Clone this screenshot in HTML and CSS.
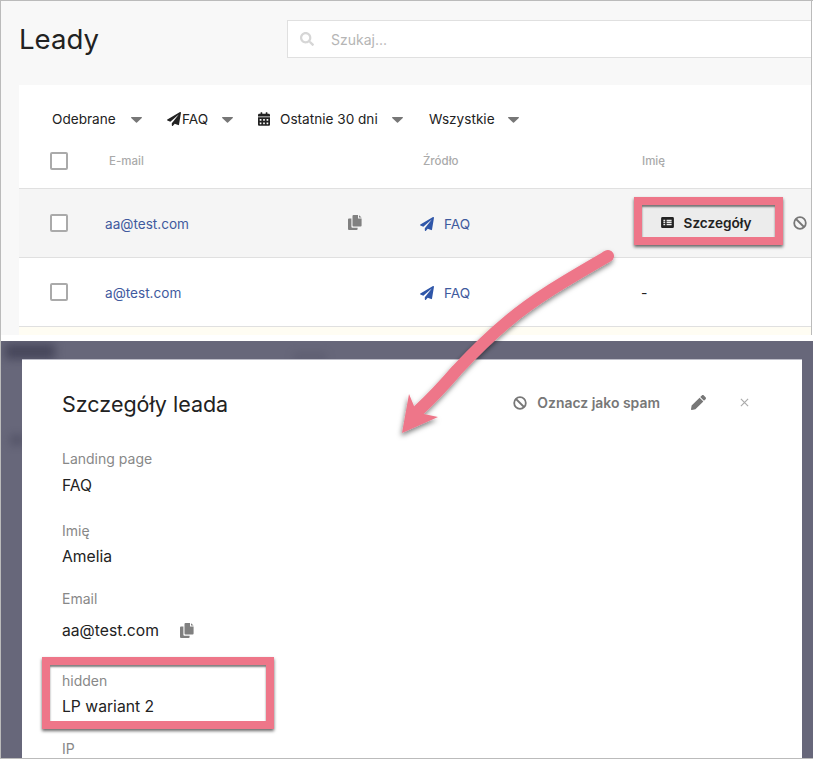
FILE: index.html
```html
<!DOCTYPE html>
<html lang="pl">
<head>
<meta charset="utf-8">
<title>Leady</title>
<link rel="stylesheet" href="styles.css">
</head>
<body>
<svg class="defs" width="0" height="0" aria-hidden="true">
  <symbol id="plane" viewBox="0 0 512 512"><path d="M476 3.2L12.5 270.6c-18.1 10.4-15.8 35.6 2.2 43.2L121 358.4l287.3-253.2c5.5-4.9 13.3 2.6 8.6 8.3L176 407v80.5c0 23.6 28.5 32.9 42.5 15.8L282 426l124.6 52.2c14.2 6 30.4-2.9 33-18.2l72-432C515 7.8 493.3-6.8 476 3.2z"/></symbol>
  <symbol id="copy" viewBox="0 0 14 15"><path d="M5.5 0H10v3.6h3.6V10.6a1 1 0 0 1-1 1H5.5a1 1 0 0 1-1-1V1a1 1 0 0 1 1-1zM11 .2l2.6 2.4H11zM3.4 3.4v8.3a1 1 0 0 0 1 1h5.2v1.2a1 1 0 0 1-1 1H1a1 1 0 0 1-1-1V4.4a1 1 0 0 1 1-1z"/></symbol>
  <symbol id="ban" viewBox="0 0 14 14"><circle cx="7" cy="7" r="5.8" fill="none" stroke="currentColor" stroke-width="1.8"/><path d="M3 3l8 8" stroke="currentColor" stroke-width="1.8"/></symbol>
  <symbol id="caret" viewBox="0 0 11 6"><path d="M.6 0h9.8c.5 0 .8.6.4 1L6 5.6c-.3.3-.7.3-1 0L.2 1C-.2.6.1 0 .6 0z"/></symbol>
</svg>
<div class="frame">
  <section class="app">
    <header class="topbar">
      <h1 class="title">Leady</h1>
      <div class="search">
        <svg class="search-icon" viewBox="0 0 512 512"><path d="M505 442.7L405.3 343c-4.5-4.5-10.6-7-17-7H372c27.6-35.3 44-79.7 44-128C416 93.1 322.9 0 208 0S0 93.1 0 208s93.1 208 208 208c48.3 0 92.7-16.4 128-44v16.3c0 6.4 2.5 12.5 7 17l99.7 99.7c9.4 9.4 24.6 9.4 33.9 0l28.3-28.3c9.4-9.4 9.4-24.6.1-34zM208 336c-70.7 0-128-57.2-128-128 0-70.7 57.2-128 128-128 70.7 0 128 57.2 128 128 0 70.7-57.2 128-128 128z"/></svg>
        <span class="search-text">Szukaj...</span>
      </div>
    </header>
    <div class="card">
      <div class="filters">
        <div class="filter filter-a"><span>Odebrane</span><svg class="caret"><use href="#caret"/></svg></div>
        <div class="filter filter-b"><svg class="f-plane"><use href="#plane"/></svg><span>FAQ</span><svg class="caret"><use href="#caret"/></svg></div>
        <div class="filter filter-c">
          <svg class="f-cal" viewBox="0 0 448 512"><path d="M0 464c0 26.5 21.5 48 48 48h352c26.5 0 48-21.5 48-48V192H0v272zm320-196c0-6.6 5.4-12 12-12h40c6.6 0 12 5.4 12 12v40c0 6.6-5.4 12-12 12h-40c-6.6 0-12-5.4-12-12v-40zm0 128c0-6.6 5.4-12 12-12h40c6.6 0 12 5.4 12 12v40c0 6.6-5.4 12-12 12h-40c-6.6 0-12-5.4-12-12v-40zM192 268c0-6.6 5.4-12 12-12h40c6.6 0 12 5.4 12 12v40c0 6.6-5.4 12-12 12h-40c-6.6 0-12-5.4-12-12v-40zm0 128c0-6.6 5.4-12 12-12h40c6.6 0 12 5.4 12 12v40c0 6.6-5.4 12-12 12h-40c-6.6 0-12-5.4-12-12v-40zM64 268c0-6.6 5.4-12 12-12h40c6.6 0 12 5.4 12 12v40c0 6.6-5.4 12-12 12H76c-6.6 0-12-5.4-12-12v-40zm0 128c0-6.6 5.4-12 12-12h40c6.6 0 12 5.4 12 12v40c0 6.6-5.4 12-12 12H76c-6.6 0-12-5.4-12-12v-40zM400 64h-48V16c0-8.8-7.2-16-16-16h-32c-8.8 0-16 7.2-16 16v48H160V16c0-8.8-7.2-16-16-16h-32c-8.8 0-16 7.2-16 16v48H48C21.5 64 0 85.5 0 112v48h448v-48c0-26.5-21.5-48-48-48z"/></svg>
          <span>Ostatnie 30 dni</span><svg class="caret"><use href="#caret"/></svg>
        </div>
        <div class="filter filter-d"><span>Wszystkie</span><svg class="caret"><use href="#caret"/></svg></div>
      </div>
      <div class="row row-head">
        <span class="check"></span>
        <span class="th th-mail">E-mail</span>
        <span class="th th-source">Źródło</span>
        <span class="th">Imię</span>
      </div>
      <div class="row row-body row-hover">
        <span class="check"></span>
        <div class="cell-mail"><a class="link">aa@test.com</a><svg class="copy"><use href="#copy"/></svg></div>
        <a class="source"><svg class="plane"><use href="#plane"/></svg>FAQ</a>
        <div class="actions">
          <button class="details">
            <svg class="list" viewBox="0 0 14 12"><path fill-rule="evenodd" d="M1.5 0h11A1.5 1.5 0 0 1 14 1.5v9a1.5 1.5 0 0 1-1.5 1.5h-11A1.5 1.5 0 0 1 0 10.500v-9A1.500 1.500 0 0 1 1.500 0zM2.500 3v1.500h2V3zm3.500 0v1.500h5.500V3zM2.500 5.300v1.500h2V5.300zm3.500 0v1.500h5.500V5.300zM2.500 7.600v1.500h2V7.600zm3.500 0v1.500h5.500V7.600z"/></svg>
            Szczegóły
          </button>
          <svg class="ban ban-row"><use href="#ban"/></svg>
        </div>
      </div>
      <div class="row row-body">
        <span class="check"></span>
        <div class="cell-mail"><a class="link">a@test.com</a></div>
        <a class="source"><svg class="plane"><use href="#plane"/></svg>FAQ</a>
        <span class="dash">-</span>
      </div>
      <div class="row-new"></div>
    </div>
  </section>
  <section class="overlay">
    <div class="blur blur-top"></div>
    <div class="blur blur-mid"></div>
    <div class="blur blur-left"></div>
    <div class="modal">
      <div class="modal-head">
        <h2 class="modal-title">Szczegóły leada</h2>
        <div class="modal-tools">
          <span class="spam"><svg class="ban"><use href="#ban"/></svg>Oznacz jako spam</span>
          <svg class="pencil" viewBox="0 0 512 512"><path d="M497.900 142.100l-46.100 46.100c-4.700 4.700-12.300 4.700-17 0l-111-111c-4.700-4.700-4.700-12.300 0-17l46.100-46.100c18.700-18.700 49.100-18.700 67.900 0l60.100 60.100c18.800 18.700 18.800 49.100 0 67.900zM284.200 99.800L21.600 362.400.4 483.900c-2.900 16.400 11.400 30.600 27.800 27.800l121.500-21.300 262.600-262.600c4.700-4.700 4.700-12.300 0-17l-111-111c-4.800-4.700-12.400-4.700-17.100 0z"/></svg>
          <svg class="close" viewBox="0 0 10 10"><path d="M1 1l8 8M9 1l-8 8"/></svg>
        </div>
      </div>
      <div class="field field-lp"><div class="label">Landing page</div><div class="value">FAQ</div></div>
      <div class="field field-name"><div class="label">Imię</div><div class="value">Amelia</div></div>
      <div class="field field-email"><div class="label">Email</div><div class="value value-mail">aa@test.com<svg class="copy"><use href="#copy"/></svg></div></div>
      <div class="field field-hidden"><div class="label">hidden</div><div class="value">LP wariant 2</div></div>
      <div class="field field-ip"><div class="label">IP</div></div>
    </div>
  </section>
</div>
<div class="mark mark-button"></div>
<div class="mark mark-field"></div>
<svg class="arrow" viewBox="0 0 813 759" width="813" height="759">
  <defs><filter id="sh" x="-20%" y="-20%" width="140%" height="140%"><feDropShadow dx="-1" dy="3" stdDeviation="2.500" flood-color="#000" flood-opacity=".5"/></filter></defs>
  <g filter="url(#sh)" fill="#ee7689">
    <path d="M608 256C570 278 535 298 507 322C490 336 472 354 457 370C445 384 432 398 419 410" fill="none" stroke="#ee7689" stroke-width="12" stroke-linecap="round"/>
    <path d="M402 433L409 394L414 406L424 414L438 417Z"/>
  </g>
</svg>
</body>
</html>
```
FILE: styles.css
```css
* { box-sizing: border-box; }
html, body { margin: 0; padding: 0; }
body {
  position: relative;
  width: 813px;
  height: 759px;
  overflow: hidden;
  background: #fff;
  font-family: Inter, "Liberation Sans", sans-serif;
  color: #222;
}
.defs { position: absolute; }
.frame {
  height: 759px;
  border-top: 1px solid #bbb;
  border-left: 1px solid #bbb;
  border-bottom: 1px solid #bbb;
  display: flex;
  flex-direction: column;
  overflow: hidden;
}
.app {
  height: 334px;
  width: 811px;
  flex: none;
  background: #f8f8f8;
  border-right: 1px solid #bbb;
  overflow: hidden;
}
.topbar {
  height: 84px;
  display: flex;
  padding: 19px 0 0 18px;
}
.title {
  margin: 0;
  width: 268px;
  font-size: 27.600px;
  font-weight: 400;
  line-height: 38px;
  color: #222;
}
.search {
  flex: 1;
  height: 38px;
  background: #fff;
  border: 1px solid #e0e0e0;
  border-right: 0;
  display: flex;
  align-items: center;
  padding-left: 12px;
}
.search-icon { width: 14px; height: 14px; fill: #d6d6d6; margin-right: 17px; }
.search-text { font-size: 14px; color: #b5b5b5; }
.card {
  margin-left: 18px;
  background: #fff;
  height: 250px;
}
.filters {
  height: 67px;
  padding: 1px 0 0 33px;
  display: flex;
  align-items: center;
  font-size: 13.600px;
  color: #222;
}
.filter { display: flex; align-items: center; }
.filter-a { width: 115px; }
.filter-b { width: 91px; }
.filter-c { width: 171px; }
.caret { width: 11px; height: 6px; fill: #777; margin-left: 15px; margin-top: 2px; flex: none; }
.filter-b .caret { margin-left: 14px; }
.filter-c .caret { margin-left: 14px; }
.filter-d .caret { margin-left: 13px; }
.f-plane { width: 14px; height: 14px; fill: #222; margin-right: 1px; }
.f-cal { width: 12px; height: 14px; fill: #222; margin-right: 10px; }
.row {
  display: grid;
  grid-template-columns: 55px 317px 220px 1fr;
  align-items: center;
  padding-left: 31px;
}
.row-head { height: 37px; padding-bottom: 19px; border-bottom: 1px solid #e0e0e0; }
.check {
  width: 18px;
  height: 18px;
  background: #fff;
  border: 2px solid #aaa;
  border-radius: 2px;
}
.th { font-size: 11.500px; font-weight: 500; color: #aaa; }
.th-mail { padding-left: 4px; }
.th-source { padding-left: 1px; }
.row-body { height: 69px; border-bottom: 1px solid #e0e0e0; }
.row-hover { background: #f5f5f5; }
.cell-mail { display: flex; align-items: center; justify-content: space-between; width: 257px; }
.link, .source { font-size: 13.600px; color: #3f5a9e; padding-top: 2px; }
.copy { width: 14px; height: 15px; fill: #808080; }
.cell-mail .copy { margin-top: -2px; }
.source { display: flex; align-items: center; margin-left: -2px; }
.plane { width: 14px; height: 14px; fill: #2f56a8; margin-right: 10px; }
.actions { display: flex; align-items: center; }
.details {
  width: 133px;
  height: 32px;
  margin-top: -4px;
  padding: 3px 5px 0 0;
  border: 0;
  background: #ececec;
  font: 600 13.600px Inter, "Liberation Sans", sans-serif;
  color: #222;
  display: flex;
  align-items: center;
  justify-content: center;
  gap: 10px;
}
.list { width: 13px; height: 11px; fill: #222; }
.ban { width: 14px; height: 14px; color: #777; flex: none; }
.ban-row { margin-left: 18px; }
.dash { font-size: 14px; margin-left: -1px; }
.row-new { height: 9px; background: #fffdf3; }
.overlay {
  position: relative;
  flex: 1;
  margin-top: 6px;
  width: 813px;
  background: #67677a;
  padding: 18px 0 0 21px;
  overflow: hidden;
}
.blur { position: absolute; background: #46465a; filter: blur(5px); }
.blur-top { left: 4px; top: 3px; width: 50px; height: 15px; }
.blur-mid { left: 292px; top: 12px; width: 34px; height: 8px; opacity: .3; }
.blur-left { left: 9px; top: 94px; width: 14px; height: 10px; opacity: .6; }
.modal {
  position: relative;
  width: 780px;
  height: 420px;
  background: #fff;
  border-top: 1px solid #bdbdc8;
  padding: 0 40px;
}
.modal-head {
  display: flex;
  align-items: center;
  justify-content: space-between;
  height: 89px;
}
.modal-title { margin: -2px 0 0; font-size: 21.500px; font-weight: 400; color: #222; }
.modal-tools { display: flex; align-items: center; padding-right: 13px; margin-top: -4px; }
.spam { display: flex; align-items: center; gap: 10px; font-size: 13.950px; font-weight: 600; color: #777; }
.pencil { width: 15px; height: 15px; fill: #777; margin-left: 31px; }
.close { width: 9px; height: 9px; stroke: #aaa; stroke-width: 1.300; fill: none; margin-left: 34px; }
.label { font-size: 14px; line-height: 18px; color: #888; }
.value { font-size: 15.700px; line-height: 22px; color: #222; }
.field-lp { margin-top: 1px; }
.field-lp .value { margin-top: 7px; }
.field-name { margin-top: 25px; }
.field-name .value { margin-top: 6px; }
.field-email { margin-top: 22px; }
.value-mail { display: flex; align-items: center; margin-top: 12px; gap: 21px; }
.value-mail .copy { margin-top: -1px; }
.field-hidden { margin-top: 30px; }
.field-hidden .value { margin-top: 6px; }
.field-ip { margin-top: 22px; }
.mark {
  position: absolute;
  border: 8px solid #ee7689;
  box-shadow: 0 2px 3px rgba(0,0,0,.6), inset 0 2px 2px rgba(0,0,0,.5);
}
.mark-button { left: 634px; top: 197px; width: 149px; height: 48px; }
.mark-field { left: 42px; top: 657px; width: 232px; height: 72px; }
.arrow { position: absolute; left: 0; top: 0; pointer-events: none; }
```
